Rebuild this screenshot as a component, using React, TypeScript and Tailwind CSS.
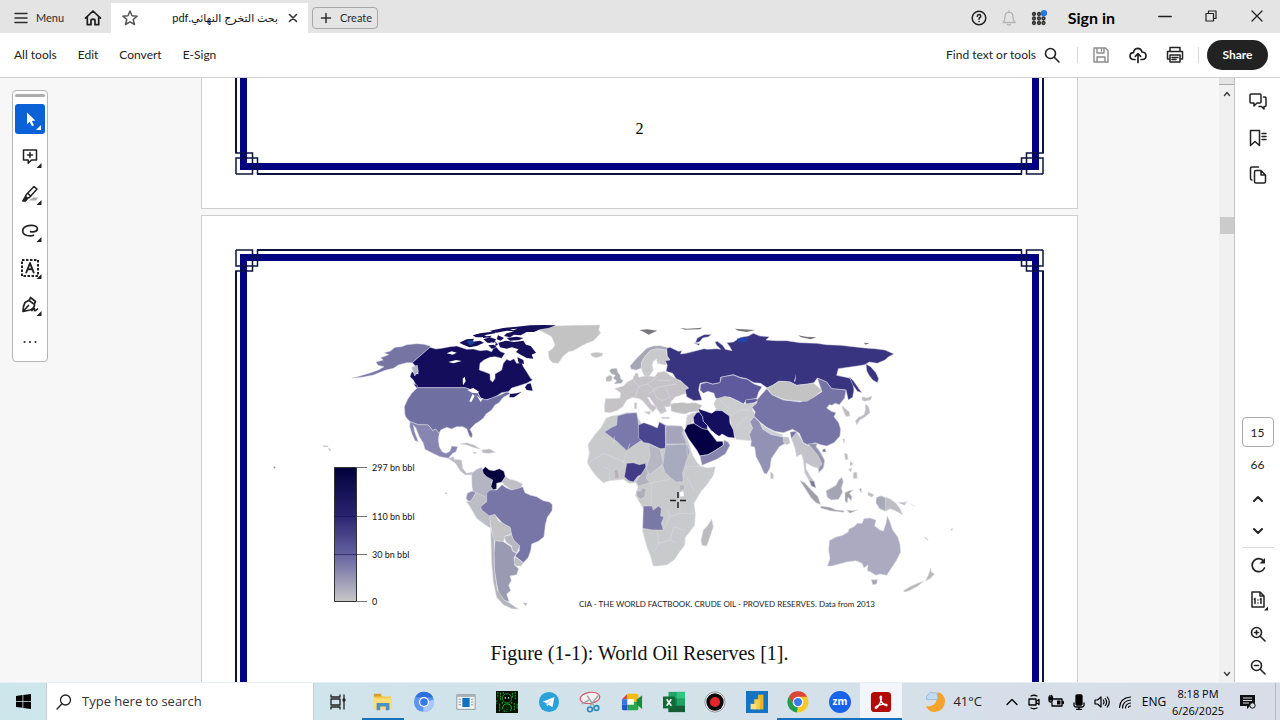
import type { ReactNode } from "react";

type IconProps = { children: ReactNode; size?: string; box?: string; sw?: number };

function Icon({ children, size = "size-[20px]", box = "0 0 20 20", sw = 1.5 }: IconProps) {
  return (
    <svg
      className={`${size} shrink-0`}
      viewBox={box}
      fill="none"
      stroke="currentColor"
      strokeWidth={sw}
      strokeLinecap="round"
      strokeLinejoin="round"
      aria-hidden="true"
    >
      {children}
    </svg>
  );
}

function IconButton({ label, className = "", children }: { label: string; className?: string; children: ReactNode }) {
  return (
    <button type="button" aria-label={label} className={`flex items-center justify-center ${className}`}>
      {children}
    </button>
  );
}

/* ---------- Title bar ---------- */

function TitleBar() {
  return (
    <header className="flex h-[33px] shrink-0 items-center bg-[#e4e4e4] text-[#2c2c2c]">
      <button type="button" className="flex h-full w-[74px] items-center gap-2 pl-[14px] pt-[3px] text-[11px]">
        <Icon size="size-[14px]" box="0 0 14 14">
          <path d="M1 2.5h12M1 7h12M1 11.5h12" />
        </Icon>
        Menu
      </button>
      <IconButton label="Home" className="w-[37px] pt-[3px] text-[#1f1f1f]">
        <Icon size="size-[18px]" box="0 0 18 18" sw={1.7}>
          <path d="M1.5 9.2 9 2l7.500 7.200M3.300 8v7.700h3.700v-4.200q0-1.300 2-1.300t2 1.300v4.200h3.700V8" />
        </Icon>
      </IconButton>
      <div className="flex h-[30px] w-[197px] items-center self-end bg-white pl-[10px] pr-[7px]">
        <IconButton label="Add to favourites" className="text-[#555]">
          <Icon size="size-[18px]" box="0 0 18 18">
            <path d="m9 2 2 4.800 5.200.400-4 3.300 1.300 5L9 12.800l-4.500 2.700 1.300-5-4-3.300L7 6.800z" />
          </Icon>
        </IconButton>
        <span
          dir="rtl"
          className="min-w-0 flex-1 pr-[7px] text-right font-['Lato','DejaVu_Sans',sans-serif] text-[11px] text-[#111]"
        >
          <bdi dir="rtl" className="block text-start">
            بحث التخرج النهائي.pdf
          </bdi>
        </span>
        <IconButton label="Close tab" className="size-[16px]">
          <Icon size="size-[10px]" box="0 0 10 10">
            <path d="m1.500 1.500 7 7M8.500 1.500l-7 7" />
          </Icon>
        </IconButton>
      </div>
      <button
        type="button"
        className="ml-[4px] mt-[3px] flex h-[22px] w-[66px] items-center gap-2 rounded-[4px] border border-[#a8a8a8] pl-[7px] text-[11px]"
      >
        <Icon size="size-[12px]" box="0 0 12 12">
          <path d="M6 1.500v9M1.500 6h9" />
        </Icon>
        Create
      </button>
      <div className="ml-auto flex h-full items-center pt-[2px]">
        <IconButton label="Help" className="w-[30px] text-[#222]">
          <Icon size="size-[16px]" box="0 0 16 16">
            <circle cx="8" cy="8" r="6.800" />
            <path d="M6.300 6.300q.2-1.700 1.800-1.700T9.800 6.100Q9.800 7 8.900 7.500 8 8 8 9.200M8 11.500v.1" />
          </Icon>
        </IconButton>
        <IconButton label="Notifications" className="w-[30px] text-[#b4b4b4]">
          <Icon size="size-[16px]" box="0 0 16 16" sw={1.300}>
            <path d="M2 12.500q2-2 2-5.500 0-4.500 4-4.800 4 .300 4 4.800 0 3.500 2 5.500zM6.500 14.500q1.500 1 3 0M8 1v1" />
          </Icon>
        </IconButton>
        <IconButton label="Apps" className="w-[30px] text-[#333]">
          <svg className="size-[16px]" viewBox="0 0 16 16" aria-hidden="true">
            <g fill="none" stroke="currentColor" strokeWidth="1.700">
              <circle cx="3" cy="4" r="1.300" />
              <circle cx="8" cy="4" r="1.300" />
              <circle cx="3" cy="8.500" r="1.300" />
              <circle cx="8" cy="8.500" r="1.300" />
              <circle cx="12.500" cy="8.500" r="1.300" />
              <circle cx="3" cy="13" r="1.300" />
              <circle cx="8" cy="13" r="1.300" />
              <circle cx="12.500" cy="13" r="1.300" />
            </g>
            <circle cx="13" cy="3.200" r="3.200" fill="#2878e0" />
          </svg>
        </IconButton>
        <button type="button" className="ml-[14px] text-[16px] font-bold leading-[20px] text-black">
          Sign in
        </button>
        <div className="ml-[27px] flex h-full items-center pb-[3px] text-[#222]">
          <IconButton label="Minimize" className="w-[46px]">
            <Icon size="size-[14px]" box="0 0 14 14">
              <path d="M.8 7.500h12.400" />
            </Icon>
          </IconButton>
          <IconButton label="Restore" className="w-[46px]">
            <Icon size="size-[12px]" box="0 0 12 12" sw={1.200}>
              <path d="M1 3.500h7.500V11H1zM3.500 3.500V1H11v7.500H8.500" />
            </Icon>
          </IconButton>
          <IconButton label="Close" className="w-[46px]">
            <Icon size="size-[12px]" box="0 0 12 12" sw={1.300}>
              <path d="m1 1 10 10M11 1 1 11" />
            </Icon>
          </IconButton>
        </div>
      </div>
    </header>
  );
}

/* ---------- Tool bar ---------- */

function ToolBar() {
  return (
    <div className="flex h-[45px] shrink-0 items-center border-b border-[#cfcfcf] bg-white pl-[14px] pr-[12px] text-[12px] text-[#222]">
      <nav className="flex items-center gap-[21px]">
        <button type="button">All tools</button>
        <button type="button">Edit</button>
        <button type="button">Convert</button>
        <button type="button">E-Sign</button>
      </nav>
      <div className="ml-auto flex items-center">
        <button type="button" className="flex items-center gap-2">
          Find text or tools
          <Icon size="size-[16px]" box="0 0 16 16" sw={1.600}>
            <circle cx="6.500" cy="6.500" r="5" />
            <path d="m10.500 10.500 4.500 4.500" />
          </Icon>
        </button>
        <span className="ml-[17px] h-[16px] w-px bg-[#d8d8d8]" />
        <IconButton label="Save" className="ml-[4px] w-[37px] text-[#8c8c8c]">
          <Icon size="size-[16px]" box="0 0 16 16" sw={1.400}>
            <path d="M1 1h11.500L15 3.500V15H1zM4 1v5h7V1M4 15v-5h8v5M8.500 2.500v1.500" />
          </Icon>
        </IconButton>
        <IconButton label="Upload" className="w-[37px]">
          <Icon size="size-[18px]" box="0 0 18 18" sw={1.700}>
            <path d="M6 13.500H4.500Q1 13.200 1 10t3.500-3.300Q5 2.500 8.500 2.300q3.700 0 4.500 3.700 4 .2 4 3.700 0 3.600-3.500 3.800H12M9 16.500V8M6.300 10.300 9 7.700l2.700 2.600" />
          </Icon>
        </IconButton>
        <IconButton label="Print" className="w-[38px]">
          <Icon size="size-[18px]" box="0 0 18 18">
            <path d="M4 5V1.500h10V5M4 13H1.500V5.500h15V13H14M4 9h10v7H4zM6 11.500h6M6 13.500h4" />
          </Icon>
        </IconButton>
        <span className="ml-[4px] h-[16px] w-px bg-[#d8d8d8]" />
        <button type="button" className="ml-[8px] h-[30px] w-[61px] rounded-full bg-[#222] text-[12px] font-bold text-white">
          Share
        </button>
      </div>
    </div>
  );
}

/* ---------- Quick tools ---------- */

function QuickTools() {
  return (
    <aside className="w-[60px] shrink-0 pl-[12px] pt-[12px]">
      <div className="flex w-[36px] flex-col items-center gap-[7px] rounded-[4px] border border-[#b5b5b5] bg-white pb-[4px] pt-[3px] text-[#222]">
        <span className="h-[3px] w-[30px] rounded-full bg-[#ababab]" />
        <IconButton label="Select" className="mb-px size-[30px] rounded-[3px] bg-[#0b62d6] text-white">
          <Icon size="size-[24px]" box="0 0 24 24">
            <path d="M9 5.500v11.800l2.700-2.600 2.300 4.500 2-1-2.200-4.300 3.500-.3z" fill="currentColor" stroke="none" />
            <path d="M23 18v5h-5z" fill="currentColor" stroke="none" />
          </Icon>
        </IconButton>
        <IconButton label="Add comment" className="size-[30px]">
          <Icon size="size-[24px]" box="0 0 24 24">
            <path d="M5.500 5h13v10h-5l-3.300 3.300V15H5.500zM12 7.500v5M9.500 10h5" />
            <path d="M23.500 18v5h-5z" fill="currentColor" stroke="none" />
          </Icon>
        </IconButton>
        <IconButton label="Highlight" className="size-[30px]">
          <Icon size="size-[24px]" box="0 0 24 24">
            <path d="M11 18.500h7l2-3h-5z" fill="#aaa" stroke="none" />
            <path d="m8 13 8-8.500 3 2.600-7.600 8.400-2.500.8-1.400-1.100zM10 11.500l2.800 2.700" />
            <path d="m7.500 14.500 2 2-2 2.500H4.800z" fill="currentColor" />
            <path d="M23.500 18v5h-5z" fill="currentColor" stroke="none" />
          </Icon>
        </IconButton>
        <IconButton label="Draw" className="size-[30px]">
          <Icon size="size-[24px]" box="0 0 24 24" sw={1.700}>
            <path d="M12.500 12.700q5.500 1 6.800-2 .8-4-5.300-4.400-6.500-.2-9 3.700-1.500 5 4 6.500 4.300.8 6.500-.3" />
            <path d="M23.500 18v5h-5z" fill="currentColor" stroke="none" />
          </Icon>
        </IconButton>
        <IconButton label="Add text" className="size-[30px]">
          <Icon size="size-[24px]" box="0 0 24 24">
            <path d="M4 4h16v16H4z" strokeDasharray="2.500 1.500" strokeLinecap="butt" strokeWidth="2" />
            <path d="m8.300 16.500 3.700-9.500 3.700 9.500M9.600 13.300h4.800" strokeWidth="1.900" />
            <path d="M23.500 18v5h-5z" fill="currentColor" stroke="none" />
          </Icon>
        </IconButton>
        <IconButton label="Sign" className="size-[30px]">
          <Icon size="size-[24px]" box="0 0 24 24" sw={1.700}>
            <path d="m12.500 4.500 5 4-1 2q.5 5-4.500 6.500l-7 1.500q0-5.500 2-9l4.500-2.500zM10.800 7.200l5.500 4.200M5.500 18l5-5.500M14 17.500q2.500-3.500 2.500-1t3-.5" />
            <path d="M23.500 18v5h-5z" fill="currentColor" stroke="none" />
          </Icon>
        </IconButton>
        <IconButton label="More tools" className="size-[30px]">
          <Icon size="size-[16px]" box="0 0 16 16">
            <g fill="currentColor" stroke="none">
              <circle cx="2.500" cy="8" r="1" />
              <circle cx="8" cy="8" r="1" />
              <circle cx="13.500" cy="8" r="1" />
            </g>
          </Icon>
        </IconButton>
      </div>
    </aside>
  );
}

/* ---------- Document ---------- */

function Ornament({ className }: { className: string }) {
  return (
    <svg className={`absolute size-[24px] ${className}`} viewBox="0 0 24 24" fill="none" stroke="#0b1440" strokeWidth="1.500" aria-hidden="true">
      <path d="M1 1h16.500v21H1v2M1 1v16h21.500V1H24" />
    </svg>
  );
}

function Sheet({ cut, children }: { cut: "top" | "bottom"; children: ReactNode }) {
  const top = cut === "bottom";
  return (
    <section
      className={`mx-auto w-full max-w-[877px] border-x border-[#cfcfcf] bg-white px-[33px] ${
        top ? "border-t pt-[33px]" : "border-b pb-[33px]"
      }`}
    >
      <div className={`relative ${top ? "pt-[12px]" : "pb-[12px]"}`}>
        <span
          className={`absolute left-0 w-[2px] bg-[#0b1440] ${top ? "bottom-0 top-[22px]" : "bottom-[22px] top-0"}`}
        />
        <span
          className={`absolute right-0 w-[2px] bg-[#0b1440] ${top ? "bottom-0 top-[22px]" : "bottom-[22px] top-0"}`}
        />
        <span className={`absolute inset-x-[22px] h-[2px] bg-[#0b1440] ${top ? "top-0" : "bottom-0"}`} />
        <span
          className={`absolute inset-x-[5px] border-x-[7px] border-[#000080] ${
            top ? "bottom-0 top-[5px] border-t-[7px]" : "bottom-[5px] top-0 border-b-[7px]"
          }`}
        />
        <Ornament className={top ? "left-0 top-0" : "bottom-0 left-0 -scale-y-100"} />
        <Ornament className={top ? "right-0 top-0 -scale-x-100" : "bottom-0 right-0 -scale-100"} />
        <div className="relative px-[12px]">{children}</div>
      </div>
    </section>
  );
}

const americas: [string, string][] = [
  ["#7574a3", "M360 108 342 103 320 101 290 104 275 110 255 112 240 124 222 128 236 134 212 143 220 150 198 156 204 166 222 170 205 180 178 190 150 198 125 205 160 201 190 195 225 181 250 175 265 165 290 158 307 158 360 112Z"],
  ["#130d5c", "M360 112 378 117 395 115 420 110 440 108 452 112 470 118 490 117 510 122 530 120 545 125 550 115 560 112 570 124 585 130 575 145 555 140 540 142 522 150 510 160 508 180 525 186 540 192 541 210 548 216 555 205 555 192 575 180 580 160 590 148 600 152 612 146 620 160 635 158 640 170 650 185 662 205 668 210 650 220 625 228 605 234 595 245 575 248 560 258 545 265 525 270 510 262 505 250 485 240 465 233 322 233 310 210 300 200 305 185 325 192 318 170 307 158Z"],
  ["#b6b6cb", "M305 172 322 166 325 185 314 198Z"],
  ["#130d5c", "M310 220 322 226 320 235Z"],
  ["#706fa1", "M322 233H465L485 240 500 243 512 265 530 270 550 262 568 256 590 246 602 250 580 262 567 278 555 285 545 300 528 312 520 325 505 336 495 342 480 358 487 372 486 384 478 378 470 356 458 350 440 350 425 357 410 352 392 360 388 370 376 357 368 362 355 345 325 344 300 335 288 322 285 315 283 290 293 268 305 250Z"],
  ["#8886b0", "M300 335 325 344 355 345 368 362 376 357 388 370 385 388 388 410 396 425 408 430 420 424 425 408 443 410 438 425 428 430 415 445 390 440 365 428 345 418 340 400 328 380 318 355 310 345 314 365 325 395 315 392 306 372 299 350Z"],
  ["#bcbcc0", "M415 445 432 440 432 448 455 450 458 475 470 490 488 486 485 494 466 495 452 484 436 460Z"],
  ["#b9b9bd", "M450 402 470 398 492 405 512 417 495 414 470 405ZM515 420 538 417 557 427 535 430 518 428ZM488 426 502 428 492 431Z"],
  ["#c3c3c4", "M665 52 700 50 735 48 800 46 870 45 866 60 872 68 862 80 850 92 830 100 810 110 790 122 775 125 758 140 745 160 728 158 718 148 715 125 728 116 735 105 730 92 725 80 700 66Z"],
  ["#b4b4c3", "M485 490 500 478 515 472 522 490 540 500 550 502 545 520 556 540 536 548 530 575 508 556 490 550 486 530Z"],
  ["#05023d", "M517 480 526 470 538 480 552 482 568 476 582 484 586 500 576 516 560 520 560 536 550 540 543 530 548 510 530 500 520 490Z"],
  ["#bfbfc4", "M586 500 600 508 618 512 638 522 632 536 605 540 582 524 576 516Z"],
  ["#9190b1", "M472 550 486 543 498 548 485 572 475 574 468 565Z"],
  ["#bdbdc5", "M468 575 482 574 498 548 530 562 532 574 516 588 522 605 540 615 542 655 522 642 500 625 486 600 475 582Z"],
  ["#7876a7", "M530 550 540 540 560 540 576 524 590 534 605 540 625 535 638 530 645 548 662 556 680 560 700 572 718 576 727 584 726 602 712 622 706 645 702 680 685 694 665 702 662 722 655 742 640 758 615 738 628 722 628 708 610 690 603 670 600 652 580 642 555 615 538 618 515 600 512 590 530 575Z"],
  ["#c4c4c7", "M538 618 555 613 565 632 600 652 605 672 585 678 580 695 550 692 545 660Z"],
  ["#b7b7c1", "M582 680 604 674 612 692 630 708 620 728 608 722 605 708 588 696Z"],
  ["#bfc0c6", "M615 740 640 758 634 768 618 768 612 758Z"],
  ["#9a9ab3", "M555 692 580 695 603 710 608 724 620 730 612 742 614 766 626 776 620 794 600 798 604 812 596 826 602 842 590 852 598 876 582 870 566 850 560 820 553 780 552 730Z"],
  ["#b3b3ba", "M542 655 552 692 552 730 554 785 562 840 582 870 600 880 625 898 606 896 580 884 560 862 550 815 545 760Z"],
  ["#aaaab2", "M640 878 652 880 646 888Z"],
  ["#b0b0b0", "M40 407H54V410H40ZM56 414 62 418 62 424 57 420ZM405 548H411V552H407Z"],
];

const arctic =
  "M448 98 470 88 492 86 488 95 510 92 522 98 500 108 478 112 460 104ZM488 76 510 70 540 66 560 60 555 70 530 74 515 82 498 82ZM540 62 580 54 620 50 660 46 700 45 738 46 715 54 690 58 672 66 650 66 632 76 612 74 600 82 582 78 590 70 612 64 590 62 560 68ZM520 88 540 82 558 88 552 100 532 98ZM564 76 582 84 572 92 560 88ZM565 98 588 92 612 96 640 92 648 104 662 108 678 128 665 134 670 146 650 144 632 134 618 126 626 118 606 112 590 116 570 112ZM622 142 640 150 642 162 626 158ZM590 84 620 80 640 84 628 90 600 92ZM535 106 552 104 560 112 545 116ZM512 74 530 79 545 77 540 82 520 84ZM556 94 564 104 556 108ZM645 232 652 222 662 220 668 242 650 240ZM600 252 620 250 635 246 612 262 598 262Z";

const oldWorld: [string, string][] = [
  ["#a9a9b0", "M118 182 124 176 140 175 144 188 150 195 152 206 160 212 154 220 132 222 140 212 130 205 136 196 125 192Z"],
  ["#bababa", "M108 202 120 196 127 200 124 214 108 214Z"],
  ["#a7a6b4", "M180 168 200 145 215 130 230 115 250 108 270 107 294 113 288 120 262 116 240 122 226 138 215 155 214 174 200 180 184 178Z"],
  ["#c8cacb", "M214 174 215 155 226 138 240 122 262 116 288 120 292 140 300 152 285 165 262 160 260 146 250 154 246 166 250 180 238 198 226 200 218 188Z"],
  ["#c5c3c5", "M188 208 196 190 204 190 206 202 230 198 255 200 262 188 284 184 300 196 320 208 346 222 355 238 350 250 334 254 345 268 332 270 320 262 304 272 300 290 284 290 290 304 272 312 262 298 252 282 238 262 232 262 244 282 262 292 248 306 236 294 218 272 208 266 188 262 170 270 158 290 140 302 120 308 104 306 103 290 106 266 150 265 152 248 134 236 160 228 172 216Z"],
  ["#c3c3c3", "M193 278H200V296H193ZM222 306 242 304 238 314ZM274 322H298V326H276ZM350 316 362 314 356 320Z"],
  ["#bfbfc0", "M302 282 330 276 350 280 376 278 396 286 385 304 360 306 345 312 322 308 304 304Z"],
  ["#39347f", "M290 115 300 112 325 124 335 122 332 132 348 130 372 124 402 116 412 118 440 116 452 118 440 106 435 96 442 94 458 106 466 118 486 122 478 108 470 98 490 96 512 82 535 78 550 70 570 78 598 80 588 90 620 92 650 92 690 98 740 100 770 104 812 106 850 110 885 114 915 116 945 120 972 132 956 140 945 150 922 160 898 156 885 164 862 168 835 172 805 176 800 196 838 204 848 216 852 240 848 262 835 270 828 240 806 238 785 236 770 216 742 204 732 218 714 222 680 226 660 216 640 214 626 214 608 226 592 234 572 220 552 218 530 206 510 202 490 194 470 198 452 202 450 218 428 222 408 216 390 220 386 240 396 270 372 272 350 260 346 240 356 234 332 212 318 206 308 190 288 184 292 166 286 152 300 150 292 138Z"],
  ["#39347f", "M376 98 382 84 402 74 424 73 416 80 398 84 388 96ZM370 98 390 102 386 106ZM888 162 902 170 918 188 926 206 922 218 908 210 896 194 890 182ZM838 200 850 212 868 238 876 248 862 244 848 224Z"],
  ["#5e5a9d", "M390 240 392 222 410 217 428 223 450 218 454 202 472 198 490 195 512 204 532 208 552 222 576 230 566 246 560 265 528 272 520 282 506 274 480 262 462 260 452 270 436 264 432 250 414 244 400 250Z"],
  ["#cbccce", "M440 266 462 260 480 262 520 282 562 278 545 292 556 318 540 336 548 354 538 374 544 392 520 390 498 388 486 350 478 318 458 302 440 305 428 286Z"],
  ["#5e5a9d", "M526 270 558 266 568 270 552 278 528 282Z"],
  ["#7674a6", "M546 292 560 280 562 268 590 236 606 254 640 270 690 276 730 262 756 245 742 205 770 216 785 236 806 238 828 240 824 264 808 284 795 280 786 286 778 284 770 294 784 304 798 308 792 320 806 338 812 358 810 378 792 398 770 408 752 404 735 398 716 406 700 398 688 370 668 358 640 368 614 364 590 352 570 336 552 318 556 306Z"],
  ["#c3c3c3", "M590 234 612 224 628 214 660 216 680 226 714 222 732 220 756 242 730 262 710 274 670 272 640 268 608 254Z"],
  ["#cdcdd6", "M574 342 590 354 614 366 638 374 636 380 604 374 578 358Z"],
  ["#9492b4", "M544 392 538 374 548 354 540 336 552 320 570 338 578 358 604 374 636 380 650 384 646 400 628 410 612 434 604 446 600 474 590 492 582 490 570 462 558 440 554 412 542 408Z"],
  ["#bcbcbc", "M602 486 610 492 610 506 602 506Z"],
  ["#c3c4c8", "M640 380 656 382 660 400 650 404 640 396Z"],
  ["#7674a6", "M660 366 680 364 678 378 664 386Z"],
  ["#c3c3c9", "M664 386 680 366 692 384 700 400 716 408 735 404 748 420 762 446 762 468 748 486 744 474 728 470 708 458 708 476 722 500 734 516 732 532 718 514 704 488 700 450 694 432 680 440 674 412Z"],
  ["#9594b0", "M714 402 742 400 738 410 752 430 764 452 760 474 746 488 746 474 756 462 744 436 722 410Z"],
  ["#7a7a98", "M718 510 732 514 738 534 724 528ZM758 418 766 416 768 426 758 426Z"],
  ["#9f9fa5", "M690 512 704 518 724 540 744 560 752 584 738 578 722 562 706 536ZM752 588 780 592 798 600 822 602 820 607 780 602 752 594ZM830 600 846 602 862 600 840 610ZM825 548 838 542 850 540 838 550 846 560 844 572 834 562 832 578 825 574ZM868 538 874 534 874 548Z"],
  ["#a5a4b4", "M768 542 780 536 798 526 806 510 816 502 820 516 814 534 818 546 806 568 784 570 772 562Z"],
  ["#bdbdc3", "M894 546 912 554 906 562 894 556ZM920 562 934 558 960 566 978 580 990 596 998 614 976 602 960 596 946 604 928 596 918 578ZM984 578 1010 576 1014 570 1004 586ZM1022 582 1034 588Z"],
  ["#a9a8ba", "M920 562 934 558 946 564 946 602 930 596 918 578Z"],
  ["#bdbdbd", "M823 430 832 432 834 448 826 450ZM840 454 850 462 840 468ZM850 488 860 486 862 504 850 506ZM836 478 846 474 842 486ZM818 388 824 386 822 400Z"],
  ["#bcbcc0", "M816 286 828 298 838 306 840 318 828 320 820 302ZM886 282 896 290 900 308 886 320 870 330 860 344 856 332 866 322 882 314 886 300ZM876 260 890 264 906 258 902 270 884 274 876 270Z"],
  ["#acaac0", "M778 692 796 682 818 676 834 666 838 656 852 650 862 640 876 640 882 626 900 624 918 630 914 648 930 660 940 664 948 640 952 618 960 636 968 660 984 682 990 704 992 726 980 750 966 772 950 796 930 792 918 796 902 786 892 782 894 764 882 774 876 760 858 752 830 756 800 764 786 768 772 768 780 746 776 720Z"],
  ["#a6a6b0", "M904 808 912 810 922 808 920 822 908 824Z"],
  ["#b9b9b9", "M1082 774 1084 786 1094 792 1080 806 1066 812 1074 798ZM1000 842 1020 830 1046 818 1062 814 1040 830 1018 842 1004 846ZM1062 680 1072 686 1074 692ZM1142 658 1148 654 1146 662Z"],
  ["#c9cacc", "M108 325 125 318 145 315 170 308 200 308 205 325 215 342 240 346 262 354 268 336 290 346 335 348 345 372 358 402 365 430 380 456 390 468 412 474 436 470 430 496 412 522 392 546 372 580 376 612 374 646 354 672 346 682 344 706 330 724 312 750 290 765 262 768 250 768 242 740 230 708 218 664 222 628 220 594 208 576 196 556 204 532 198 518 178 520 160 508 140 510 118 512 100 518 82 502 66 482 52 458 58 430 54 404 76 372 94 352Z"],
  ["#7b79ab", "M103 366 122 354 140 345 142 318 170 310 200 308 204 330 206 352 216 390 192 406 170 422 140 394Z"],
  ["#4a458f", "M205 345 222 338 244 346 262 354 268 336 286 346 287 415 270 416 236 400 222 398 206 384Z"],
  ["#a5a4bb", "M287 347 335 348 342 360 336 366 350 402H287Z"],
  ["#a8abbd", "M287 405 352 402 360 426 350 450 338 488 340 516 318 516 300 502 284 486 278 464Z"],
  ["#b6b7c3", "M236 402 270 417 280 460 262 476 240 492 226 480 240 440Z"],
  ["#413b88", "M170 460 190 458 208 464 226 460 228 472 216 494 204 498 190 516 176 512 163 500Z"],
  ["#b2b2bf", "M228 472 234 490 228 504 240 518 206 528 198 516Z"],
  ["#aeadb8", "M200 544 212 542 216 534 228 536 224 560 212 568 200 558Z"],
  ["#7c78a6", "M220 588 246 588 250 600 266 588 274 596 272 618 282 620 274 640 280 660 246 660 218 655Z"],
  ["#b5b3bb", "M328 526 344 524 344 538 328 544Z"],
  ["#b7b4b8", "M132 480 144 476 148 504 134 508Z"],
  ["#bcbcbf", "M425 628 430 650 420 680 410 708 396 706 393 690 400 660 412 648Z"],
  ["#cdcdd2", "M348 340 350 322 364 310 384 306 372 330 360 346 346 356Z"],
  ["#040043", "M343 362 352 344 372 340 398 356 412 358 430 380 440 394 458 394 460 406 432 424 414 434 390 438 380 420 364 398 354 384Z"],
  ["#8785ad", "M390 438 414 434 432 424 460 406 462 390 474 396 480 406 466 432 440 448 420 456 396 466Z"],
  ["#19136a", "M370 322 380 308 388 306 398 320 400 334 412 346 412 358 398 356 372 340Z"],
  ["#150f60", "M385 296 396 300 408 304 424 310 436 302 456 302 478 318 480 340 490 360 494 384 474 382 456 372 446 380 424 362 412 346 400 334 398 320 388 306Z"],
];

function WorldMap() {
  return (
    <svg
      className="block h-auto w-full"
      viewBox="247 261 785 364"
      role="img"
      aria-label="World map shaded by proved crude oil reserves"
    >
      <defs>
        <linearGradient id="reserves" x1="0" y1="0" x2="0" y2="1">
          <stop offset="0" stopColor="#02003c" />
          <stop offset=".36" stopColor="#2a2470" />
          <stop offset=".65" stopColor="#6562a0" />
          <stop offset="1" stopColor="#c8c8c8" />
        </linearGradient>
      </defs>
      <g transform="translate(310 310) scale(.33333)" stroke="#dcdce8" strokeWidth="1.500" strokeLinejoin="round">
        {americas.map(([fill, d]) => (
          <path key={d} d={d} fill={fill} />
        ))}
        <path d={arctic} fill="#16105c" stroke="none" />
        <path d="M470 94 488 90 494 100 480 106Z" fill="#1646a0" stroke="none" />
        <path
          d="M410 130 425 124 440 128 428 134ZM415 156 438 150 455 153 430 160ZM458 206 464 200 467 214 459 226ZM472 240 490 234 508 246 500 250 486 248ZM488 252 494 258 484 276 478 274ZM500 256 514 268 520 264 512 276ZM606 240 620 234 632 238 618 248ZM592 120 612 124 606 130 594 128ZM540 96 560 100 548 103ZM600 58 622 56 610 61Z"
          fill="#fff"
          stroke="none"
        />
      </g>
      <g transform="translate(570 310) scale(.33333)" stroke="#dcdce6" strokeWidth="1.500" strokeLinejoin="round">
        {oldWorld.map(([fill, d]) => (
          <path key={d} d={d} fill={fill} />
        ))}
        <path
          d="M188 208 206 230 232 222 250 236 280 228 320 222M206 230 196 262M232 222 262 200M250 236 258 262 276 272 300 262M285 230 300 262M236 250 262 238M262 210 300 212M60 455 100 430 160 455M130 400 134 380M100 470 120 480 118 510M160 455 168 470M235 520 300 508M246 520 244 580M280 660 300 620 330 610 372 610M300 620 292 600M330 610 328 550M262 660 266 700 250 730M266 700 300 690 320 700M300 690 312 650 340 660M340 500 352 470 390 470M350 500 372 540M350 402 352 440M480 320 510 300 540 300M500 350 530 320M452 270 480 300M180 400 160 456 200 456"
          fill="none"
        />
        <path d="M396 252 412 248 424 254 414 268 430 280 438 296 428 308 416 304 412 286 402 270ZM314 262 336 254 352 268 372 276 340 276 318 280 306 274ZM328 548 340 544 342 558 332 560ZM672 216 678 192 676 212ZM424 360 436 372 454 382 466 380 460 388 440 388Z" fill="#fff" stroke="none" />
        <path d="M500 86 534 82 530 96 506 98Z" fill="#2246a8" stroke="none" />
        <path d="M62 130 80 127 98 130 96 138 78 143 65 138Z" fill="#c2c2c2" />
        <path d="M208 60 232 58 262 62 248 68 236 74 222 66ZM330 54 352 56 396 53 390 58 345 59ZM494 56 520 58 556 60 530 66 505 62ZM684 76 708 80 740 82 722 88 694 82ZM882 98 898 100 886 104Z" fill="#77777c" stroke="none" />
      </g>
      <g stroke="#333" strokeWidth="1">
        <path d="M334.500 467.500h22v134h-22z" fill="url(#reserves)" />
        <path d="M334 516.500h22M334 554.500h22" stroke="#17124f" opacity=".6" />
        <path d="M357 467.500h10M357 516.500h10M357 554.500h10M357 601.500h10" stroke="#777" />
      </g>
      <circle cx="274.500" cy="467.500" r="1" fill="#999" />
      <g fill="#111" fontSize="9" fontFamily="'Lato', sans-serif">
        <text x="372" y="471">297 bn bbl</text>
        <text x="372" y="520">110 bn bbl</text>
        <text x="372" y="558">30 bn bbl</text>
        <text x="372" y="605">0</text>
      </g>
      <text x="579" y="607" fill="#222" fontSize="8" fontFamily="'Lato', sans-serif">
        CIA - THE WORLD FACTBOOK. CRUDE OIL - PROVED RESERVES. Data from 2013
      </text>
      <path d="M670 500.500h6M680 500.500h6M678 492v6M678 502v6" stroke="#222" strokeWidth="1.500" />
    </svg>
  );
}

function DocumentView() {
  return (
    <main className="flex min-w-0 flex-1 flex-col gap-[6px] overflow-hidden">
      <Sheet cut="top">
        <p className="flex h-[85px] items-center justify-center pt-[16px] font-['Liberation_Serif',serif] text-[16px] text-black">
          2
        </p>
      </Sheet>
      <Sheet cut="bottom">
        <figure className="min-h-[1040px]">
          <WorldMap />
          <figcaption className="pt-[16px] text-center font-['Liberation_Serif',serif] text-[20px] leading-[24px] text-[#111]">
            Figure (1-1): World Oil Reserves [1].
          </figcaption>
        </figure>
      </Sheet>
    </main>
  );
}

function ScrollBar() {
  return (
    <div className="flex w-[16px] shrink-0 flex-col items-center border-r border-[#c4c4c4] bg-[#f0f0f0] text-[#444]">
      <span className="h-[7px] w-full border-b border-[#aaa] bg-[#e4e4e4]" />
      <IconButton label="Scroll up" className="h-[18px] w-full">
        <Icon size="size-[8px]" box="0 0 8 8">
          <path d="m1.500 5.500 2.500-3 2.500 3" />
        </Icon>
      </IconButton>
      <span className="mt-[114px] h-[17px] w-[14px] bg-[#cbcbcb]" />
      <IconButton label="Scroll down" className="mt-auto h-[16px] w-full">
        <Icon size="size-[8px]" box="0 0 8 8">
          <path d="m1.500 2.500 2.500 3 2.500-3" />
        </Icon>
      </IconButton>
    </div>
  );
}

function SideRail() {
  return (
    <aside className="flex w-[45px] shrink-0 flex-col items-center bg-white text-[#222]">
      <div className="flex flex-col items-center pt-[4px]">
        <IconButton label="Comments" className="h-[37px] w-[30px]">
          <Icon size="size-[18px]" box="0 0 18 18">
            <path d="M2 2h9q1 0 1 1v7q0 1-1 1H8l-3 3v-3H2q-1 0-1-1V3q0-1 1-1zM14.500 5H16q1 0 1 1v7.500q0 1-1 1h-1V17l-2.500-2.500H10" />
          </Icon>
        </IconButton>
        <IconButton label="Bookmarks" className="h-[37px] w-[30px]">
          <Icon size="size-[18px]" box="0 0 18 18">
            <path d="M1.500 1.500h9V16.500L6 12.500l-4.500 4zM13 4.500h4M13 7.500h4M13 10.500h4" />
          </Icon>
        </IconButton>
        <IconButton label="Pages" className="h-[37px] w-[30px]">
          <Icon size="size-[18px]" box="0 0 18 18">
            <path d="M7 4.500h5l4.500 4.500v6.500q0 1.500-1.500 1.500H7q-1.500 0-1.500-1.500V6q0-1.500 1.500-1.500zM12 4.500V9h4.500M3 14q-1.500 0-1.500-1.500v-10Q1.500 1 3 1h6.500" />
          </Icon>
        </IconButton>
      </div>
      <div className="mt-auto flex flex-col items-center text-[13px]">
        <input
          aria-label="Current page"
          defaultValue="15"
          className="h-[30px] w-[32px] rounded-[4px] border border-[#aaa] bg-white text-center text-[12px]"
        />
        <span className="flex h-[36px] items-center text-[12px]">66</span>
        <IconButton label="Previous page" className="h-[32px] w-[30px]">
          <Icon size="size-[12px]" box="0 0 12 12" sw={2}>
            <path d="m2 8 4-4 4 4" />
          </Icon>
        </IconButton>
        <IconButton label="Next page" className="h-[32px] w-[30px]">
          <Icon size="size-[12px]" box="0 0 12 12" sw={2}>
            <path d="m2 4 4 4 4-4" />
          </Icon>
        </IconButton>
        <span className="h-px w-[32px] bg-[#dcdcdc]" />
        <IconButton label="Rotate" className="h-[36px] w-[30px]">
          <Icon size="size-[18px]" box="0 0 18 18" sw={1.700}>
            <path d="M15 4.500A6.500 6.500 0 1 0 15.500 11" />
            <path d="M16 1v5.500h-5.500z" fill="currentColor" stroke="none" />
          </Icon>
        </IconButton>
        <IconButton label="Actual size" className="h-[32px] w-[30px]">
          <Icon size="size-[24px]" box="0 0 24 24">
            <path d="M6 4h8l4 4v11H6zM14 4v4h4M9 10.500v5M15 10.500v5M8.300 11l.7-.5M14.300 11l.7-.5M12 12v.1M12 15v.1" />
            <path d="M22 18.500v4h-4z" fill="currentColor" stroke="none" />
          </Icon>
        </IconButton>
        <IconButton label="Zoom in" className="h-[36px] w-[30px]">
          <Icon size="size-[16px]" box="0 0 16 16" sw={1.600}>
            <circle cx="6.500" cy="6.500" r="5" />
            <path d="m10.500 10.500 4.500 4.500M4.500 6.500h4M6.500 4.500v4" />
          </Icon>
        </IconButton>
        <IconButton label="Zoom out" className="h-[30px] w-[30px]">
          <Icon size="size-[16px]" box="0 0 16 16" sw={1.600}>
            <circle cx="6.500" cy="6.500" r="5" />
            <path d="m10.500 10.500 4.500 4.500M4.500 6.500h4" />
          </Icon>
        </IconButton>
      </div>
    </aside>
  );
}

/* ---------- Task bar ---------- */

type App = { name: string; open?: boolean; active?: boolean; art: ReactNode };

const apps: App[] = [
  {
    name: "File Explorer",
    open: true,
    art: (
      <>
        <path d="M2 4h8l2 2h9v13H2z" fill="#f5c84c" />
        <path d="M2 3h8v3H2z" fill="#d99c2a" />
        <path d="M1.500 8h20.500l-1 12H2.500z" fill="#ffdc78" />
        <path d="M5 13h14v8h-4v-4H9v4H5z" fill="#4693c4" />
      </>
    ),
  },
  {
    name: "Chromium",
    art: (
      <>
        <circle cx="12" cy="12" r="11" fill="#5c95ef" />
        <path d="M12 12 22.800 9.500A11 11 0 0 1 11 23z" fill="#a9c7fb" />
        <path d="M2.500 6.500A11 11 0 0 1 22 7H12z" fill="#2f6fdb" />
        <circle cx="12" cy="12" r="5.500" fill="#fff" />
        <circle cx="12" cy="12" r="4.200" fill="#3778e4" />
      </>
    ),
  },
  {
    name: "News",
    art: (
      <>
        <path d="M2 4h20v16H2z" fill="#f4f6f7" stroke="#8a949a" />
        <path d="M2 4h20v2.500H2z" fill="#aab3b8" />
        <path d="M8 7.500h8v10H8z" fill="#0c72c6" />
        <path d="M4 9h2.500M4 12h2.500M4 15h2.500M17.500 9H20M17.500 12H20M17.500 15H20" stroke="#888" />
      </>
    ),
  },
  {
    name: "Matrix",
    art: (
      <>
        <path d="M0 0h24v24H0z" fill="#041204" />
        <path d="M2 1v5M5 2v8M4 14v8M8 1v3M18 2v5M21 1v9M20 13v9M16 17v6M9 18v5M1 10v4M23 14v6M12 19v4M7 12v3M17 12v3" stroke="#1f9a2a" strokeWidth="1.300" strokeDasharray="2 1" />
        <circle cx="12" cy="8" r="5" fill="#020802" stroke="#1f9a2a" />
        <path d="M9.500 7.500h1.500M13 7.500h1.500" stroke="#fff" strokeWidth="1.300" />
        <path d="M7 20q0-6 5-6t5 6" fill="#062206" stroke="#26b434" />
      </>
    ),
  },
  {
    name: "Telegram",
    art: (
      <>
        <circle cx="12" cy="12" r="11" fill="#2aa1d8" />
        <path d="m5 11.700 13-5.200-2.300 11.300-4-2.900-1.900 1.900-.5-3.600z" fill="#fff" />
        <path d="m9.300 13.200 6-4.200-4.200 4.900-1.300 2.900z" fill="#b9dff0" />
      </>
    ),
  },
  {
    name: "Snipping Tool",
    art: (
      <>
        <ellipse cx="12" cy="7.500" rx="10.800" ry="6" fill="#f7f2f2" stroke="#d35c68" strokeWidth="1.300" transform="rotate(-8 12 7.500)" />
        <path d="m9 5 7 11M21 5l-9 11M3 14l8-4" stroke="#9aa3a8" strokeWidth="1.600" />
        <circle cx="12" cy="20" r="2.600" fill="none" stroke="#3187bd" strokeWidth="1.800" />
        <circle cx="19" cy="18.500" r="2.600" fill="none" stroke="#3187bd" strokeWidth="1.800" />
      </>
    ),
  },
  {
    name: "Meet",
    art: (
      <>
        <path d="M7 3v6H1z" fill="#e0453a" />
        <path d="M7 3h10q2 0 2 2v7h-5V9H7z" fill="#f8bb16" />
        <path d="M1 9h6v6H1z" fill="#3277e6" />
        <path d="M1 15h6v6H3q-2 0-2-2z" fill="#2059c8" />
        <path d="M7 9h7v6H7z" fill="#fff" />
        <path d="M7 15h7v-3h5v7q0 2-2 2H7z" fill="#2da44e" />
        <path d="m17 9.500 6-5v15l-6-5z" fill="#168c3c" />
      </>
    ),
  },
  {
    name: "Excel",
    art: (
      <>
        <path d="M6 1h18v22H6z" fill="#21a366" />
        <path d="M15 1h9v7h-9z" fill="#33c481" />
        <path d="M6 8h9v8H6z" fill="#107c41" />
        <path d="M6 16h18v7H6z" fill="#185c37" />
        <path d="M0 6h13v13H0z" fill="#0f6c38" />
        <path d="m4 9 5 7M9 9l-5 7" stroke="#fff" strokeWidth="1.800" />
      </>
    ),
  },
  {
    name: "Recorder",
    art: (
      <>
        <circle cx="12" cy="12" r="11" fill="#fff" stroke="#777" strokeWidth=".8" />
        <circle cx="12" cy="12" r="9.500" fill="#0b0b0b" />
        <circle cx="12" cy="12" r="5.500" fill="#e5252a" />
      </>
    ),
  },
  {
    name: "Power BI",
    art: (
      <>
        <path d="M0 0h24v24H0z" fill="#1473c2" />
        <path d="M13 4h6v16h-6z" fill="#e8b523" />
        <path d="M9 9h6v11H9z" fill="#f5cf4b" />
        <path d="M5 14h6v6H5z" fill="#fae084" />
      </>
    ),
  },
  {
    name: "Chrome",
    open: true,
    art: (
      <>
        <circle cx="12" cy="12" r="11.500" fill="#f7c927" />
        <path d="M2 6.200A11.500 11.500 0 0 1 22 6.200H12L7 15z" fill="#db4437" />
        <path d="M2 6.200 7.300 15 12 17.500 10.500 23.400A11.500 11.500 0 0 1 2 6.200z" fill="#1f9d58" />
        <circle cx="12" cy="12" r="5.800" fill="#fff" />
        <circle cx="12" cy="12" r="4.500" fill="#3b7ded" />
      </>
    ),
  },
  {
    name: "Zoom",
    open: true,
    art: (
      <>
        <circle cx="12" cy="12" r="12" fill="#1763ea" />
        <text x="12" y="15.500" textAnchor="middle" fontSize="11" fontWeight="700" fill="#fff" fontFamily="'Open Sans', sans-serif">
          zm
        </text>
      </>
    ),
  },
  {
    name: "Acrobat",
    open: true,
    active: true,
    art: (
      <>
        <rect x="1" y="1" width="22" height="22" rx="4" fill="#b30b07" />
        <path
          d="M11.800 5.500q1.200 0 .5 4-1 4-4.300 8.500-1.800 1.500-2.300.3 0-1.500 4.500-3 4-1.300 7.500-.8 1.500.6.700 1.500-1.500.6-4.400-2.500Q11 10 11 7q0-1.500.8-1.500z"
          fill="none"
          stroke="#fff"
          strokeWidth="1.400"
        />
      </>
    ),
  },
];

function TaskBar() {
  return (
    <footer className="flex h-[38px] shrink-0 items-stretch border-t border-[#e6eff3] bg-gradient-to-r from-[#cde6ec] via-[#d3e2ea] to-[#d8dde8] font-['Open_Sans','Noto_Sans',sans-serif] text-[#222]">
      <IconButton label="Start" className="w-[46px] text-black">
        <svg className="size-[15px]" viewBox="0 0 15 15" fill="currentColor" aria-hidden="true">
          <path d="M0 2 6.500 1v6H0zM7.300.9 15 0v7H7.300zM0 7.800h6.500v6L0 13zM7.300 7.800H15V15l-7.700-1z" />
        </svg>
      </IconButton>
      <label className="flex w-[268px] items-center gap-[10px] border-x border-[#c6ced2] bg-white pl-[9px]">
        <Icon size="size-[16px]" box="0 0 16 16" sw={1.300}>
          <circle cx="9.500" cy="6" r="5" />
          <path d="m6 9.700-5 5.300" />
        </Icon>
        <input
          aria-label="Search"
          placeholder="Type here to search"
          className="min-w-0 flex-1 text-[13px] placeholder:text-[#333] placeholder:opacity-100"
        />
      </label>
      <IconButton label="Task View" className="w-[48px]">
        <Icon size="size-[16px]" box="0 0 16 16" sw={1.300}>
          <path d="M1 1v2h9V1M1 15v-2h9v2M1 5h9v6H1zM14 1v14" />
          <circle cx="14" cy="6" r="1" fill="currentColor" />
        </Icon>
      </IconButton>
      <div className="grid w-[540px] grid-cols-13">
        {apps.map((app) => (
          <button
            key={app.name}
            type="button"
            aria-label={app.name}
            className={`flex items-center justify-center border-b-2 pt-[2px] ${
              app.open ? "border-[#1672be]" : "border-transparent"
            } ${app.active ? "bg-[#f2f6fa]" : ""}`}
          >
            <svg className="size-[22px]" viewBox="0 0 24 24" fill="none" aria-hidden="true">
              {app.art}
            </svg>
          </button>
        ))}
      </div>
      <div className="ml-auto flex items-center text-black">
        <button type="button" className="flex items-center gap-[6px] text-[13px] text-[#222]">
          <svg className="size-[23px]" viewBox="0 0 24 24" aria-hidden="true">
            <path d="M14 2q8 2 8 10-1 10-11 11-6 0-9-6 13 1 12-15z" fill="#f6a32c" />
            <path d="M3 10q-2-3 1-5 2-4 6-2 4-1 4 3 2 3-1 4z" fill="#c3daf0" stroke="#8cb2d6" strokeWidth=".8" />
          </svg>
          41°C
        </button>
        <div className="ml-[18px] flex items-center">
          <IconButton label="Show hidden icons" className="w-[23px]">
            <Icon size="size-[12px]" box="0 0 12 12" sw={1.300}>
              <path d="m1 8.500 5-5 5 5" />
            </Icon>
          </IconButton>
          <IconButton label="Camera" className="w-[22px]">
            <Icon size="size-[16px]" box="0 0 16 16" sw={1.300}>
              <path d="M3 5h7v6H3zM10 7.500 13 5.500v5L10 8.500M5 2q3-1.500 6 0M5 14q3 1.500 6 0" />
            </Icon>
          </IconButton>
          <IconButton label="Battery" className="w-[22px]">
            <Icon size="size-[16px]" box="0 0 16 16" sw={1.300}>
              <path d="M5 5h9v7H4V9M15.300 7.500v2M1 3v3q0 2 1.700 2T4.500 6V3M2 1.500V3M3.700 1.500V3" />
              <path d="M9 6.500h3.500v4H9zM1 3h3.500v3.500H1z" fill="currentColor" stroke="none" />
            </Icon>
          </IconButton>
          <IconButton label="Microphone" className="w-[23px]">
            <Icon size="size-[16px]" box="0 0 16 16" sw={1.300}>
              <rect x="5" y="1" width="6" height="10" rx="1" fill="currentColor" />
              <path d="M3 9v2.500q0 1.500 2 1.500h6q2 0 2-1.500V9M8 13v2M5.500 15.300h5" />
            </Icon>
          </IconButton>
          <IconButton label="Volume" className="w-[23px]">
            <Icon size="size-[16px]" box="0 0 16 16" sw={1.200}>
              <path d="M1 6h2.500L7 3v10l-3.500-3H1zM9.300 6q1.500 2 0 4M11.300 4.500q2.700 3.500 0 7M13.300 3q4 5 0 10" />
            </Icon>
          </IconButton>
          <IconButton label="Network" className="w-[24px]">
            <Icon size="size-[14px]" box="0 0 14 14" sw={1.200}>
              <path d="M1.500 12.500Q2 3 12.500 2M4.500 13Q4.700 6 12.500 5M7.500 13Q7.600 9 12.500 8M10.500 12.500q0-1.500 2-1.500" />
            </Icon>
          </IconButton>
        </div>
        <span className="w-[34px] text-center text-[12px]">ENG</span>
        <time className="flex w-[54px] flex-col items-center text-[11px] leading-[17px]">
          <span>8:18 PM</span>
          <span>6/26/2025</span>
        </time>
        <IconButton label="Notifications" className="ml-[6px] w-[34px]">
          <svg className="size-[16px]" viewBox="0 0 16 16" aria-hidden="true">
            <path d="M0 1h15v11h-5l-3 3v-3H0z" fill="#111" />
            <path d="M3 4h9M3 6.500h9M3 9h6" stroke="#d8dde8" />
            <circle cx="12.500" cy="11.500" r="2.700" fill="#d8dde8" stroke="#111" />
          </svg>
        </IconButton>
        <span className="ml-[10px] h-full w-px bg-[#b4bac6]" />
        <span className="w-[4px]" />
      </div>
    </footer>
  );
}

export default function App() {
  return (
    <div className="flex h-screen flex-col overflow-hidden bg-[#f7f7f7] font-['Lato','Open_Sans',sans-serif]">
      <TitleBar />
      <ToolBar />
      <div className="flex min-h-0 flex-1">
        <QuickTools />
        <DocumentView />
        <ScrollBar />
        <SideRail />
      </div>
      <TaskBar />
    </div>
  );
}
